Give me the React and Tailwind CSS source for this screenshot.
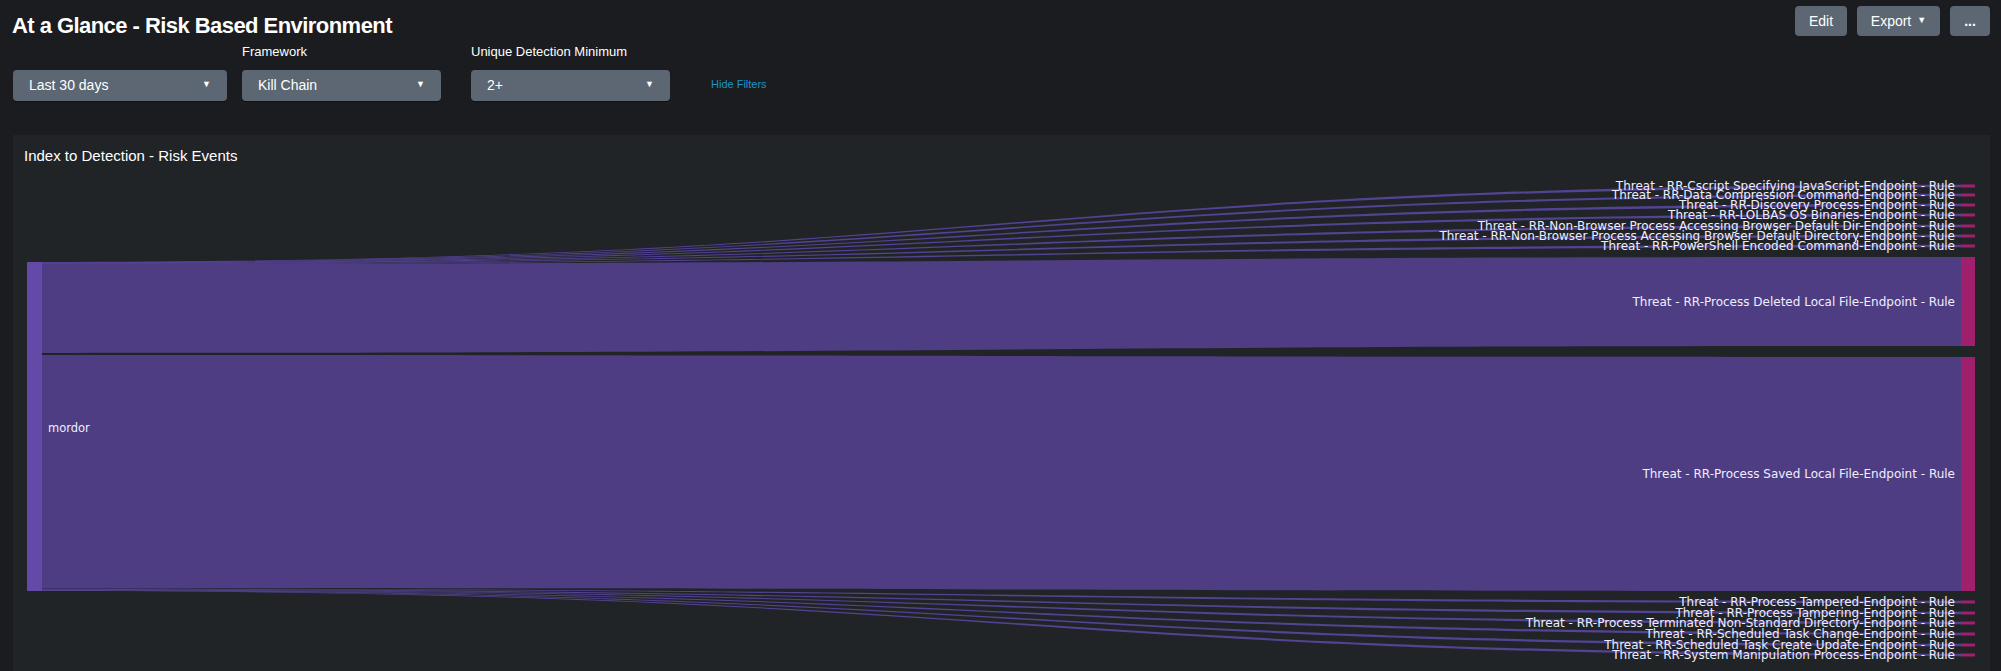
import React from 'react';

const TOP = [
  'Threat - RR-Cscript Specifying JavaScript-Endpoint - Rule',
  'Threat - RR-Data Compression Command-Endpoint - Rule',
  'Threat - RR-Discovery Process-Endpoint - Rule',
  'Threat - RR-LOLBAS OS Binaries-Endpoint - Rule',
  'Threat - RR-Non-Browser Process Accessing Browser Default Dir-Endpoint - Rule',
  'Threat - RR-Non-Browser Process Accessing Browser Default Directory-Endpoint - Rule',
  'Threat - RR-PowerShell Encoded Command-Endpoint - Rule',
];
const BOTTOM = [
  'Threat - RR-Process Tampered-Endpoint - Rule',
  'Threat - RR-Process Tampering-Endpoint - Rule',
  'Threat - RR-Process Terminated Non-Standard Directory-Endpoint - Rule',
  'Threat - RR-Scheduled Task Change-Endpoint - Rule',
  'Threat - RR-Scheduled Task Create Update-Endpoint - Rule',
  'Threat - RR-System Manipulation Process-Endpoint - Rule',
];

const X0 = 42, X1 = 1961, XM = (X0 + X1) / 2;

// band between left [a0,a1] and right [b0,b1]
function band(a0, a1, b0, b1) {
  return `M${X0},${a0} C${XM},${a0} ${XM},${b0} ${X1},${b0} L${X1},${b1} C${XM},${b1} ${XM},${a1} ${X0},${a1} Z`;
}

function Select({ value, w = 'w-[214px]' }) {
  return (
    <div className={`${w} h-[31px] bg-[#5c6773] rounded-sm flex items-center justify-between px-4 text-[14px] text-white shadow-[0_1px_0_#111]`}>
      <span>{value}</span>
      <span className="text-[9px]">▼</span>
    </div>
  );
}

export default function App() {
  const topY = [188, 197, 207, 217, 228, 238, 248];
  const botY = [604, 615, 625, 636, 647, 657];
  return (
    <div className="w-[2001px] h-[671px] bg-[#1a1c20] text-white overflow-hidden" style={{ fontFamily: '"Liberation Sans", Arial, sans-serif' }}>
      <div className="flex justify-between pl-3 pr-[11px] pt-[6px]">
        <h1 className="text-[22px] font-semibold pt-[3px] tracking-tight">At a Glance - Risk Based Environment</h1>
        <div className="flex gap-[10px] text-[14px]">
          <div className="h-[30px] w-[52px] bg-[#5c6773] rounded-sm flex items-center justify-center">Edit</div>
          <div className="h-[30px] w-[83px] bg-[#5c6773] rounded-sm flex items-center justify-center gap-1.5">Export <span className="text-[9px]">▼</span></div>
          <div className="h-[30px] w-[40px] bg-[#5c6773] rounded-sm flex items-center justify-center font-bold">...</div>
        </div>
      </div>
      <div className="flex items-end gap-[15px] pl-[13px] mt-0">
        <Select value="Last 30 days" />
        <div>
          <div className="text-[13px] mb-[8px]">Framework</div>
          <Select value="Kill Chain" w="w-[199px]" />
        </div>
        <div className="ml-[15px]">
          <div className="text-[13px] mb-[8px]">Unique Detection Minimum</div>
          <Select value="2+" w="w-[199px]" />
        </div>
        <div className="text-[11px] text-[#1e93c6] ml-[26px] mb-[8px]">Hide Filters</div>
      </div>
      <div className="ml-[13px] mr-[11px] mt-[34px] bg-[#212427] h-[540px]">
        <div className="px-[11px] pt-[10px] h-[38px] text-[15px]">Index to Detection - Risk Events</div>
        <svg width="1977" height="496" viewBox="13 175 1977 496" style={{ fontFamily: '"DejaVu Sans", Verdana, sans-serif' }}>
          {TOP.map((_, i) => (
            <path key={i} d={band(264 + i * 0.3, 264.6 + i * 0.3, topY[i] - 1.2, topY[i] + 1.2)} fill="#5a46a0" opacity="0.9" />
          ))}
          {botY.map((y, i) => (
            <path key={i} d={band(590.5 + i * 0.4, 591.1 + i * 0.4, y - 1.2, y + 1.2)} fill="#5a46a0" opacity="0.9" />
          ))}
          <path d={band(266, 355, 259, 348)} fill="#4e3d82" />
          <path d={band(357, 590, 359, 593)} fill="#4e3d82" />
          <rect x="27" y="264" width="15" height="329" fill="#6349a8" />
          <rect x="1961" y="259" width="14" height="89" fill="#a0206e" />
          <rect x="1961" y="359" width="14" height="234" fill="#a0206e" />
          {topY.map((y, i) => <rect key={i} x="1961" y={y - 1.5} width="14" height="3" fill="#a0206e" />)}
          {botY.map((y, i) => <rect key={i} x="1961" y={y - 1.5} width="14" height="3" fill="#a0206e" />)}
          <text x="48" y="434" fontSize="11.5" fill="#eef">mordor</text>
          <g fontSize="12" fill="#eef" textAnchor="end">
            {TOP.map((t, i) => <text key={i} x="1955" y={topY[i] + 4}>{t}</text>)}
            {BOTTOM.map((t, i) => <text key={i} x="1955" y={botY[i] + 4}>{t}</text>)}
            <text x="1955" y="308">Threat - RR-Process Deleted Local File-Endpoint - Rule</text>
            <text x="1955" y="480">Threat - RR-Process Saved Local File-Endpoint - Rule</text>
          </g>
        </svg>
      </div>
    </div>
  );
}
